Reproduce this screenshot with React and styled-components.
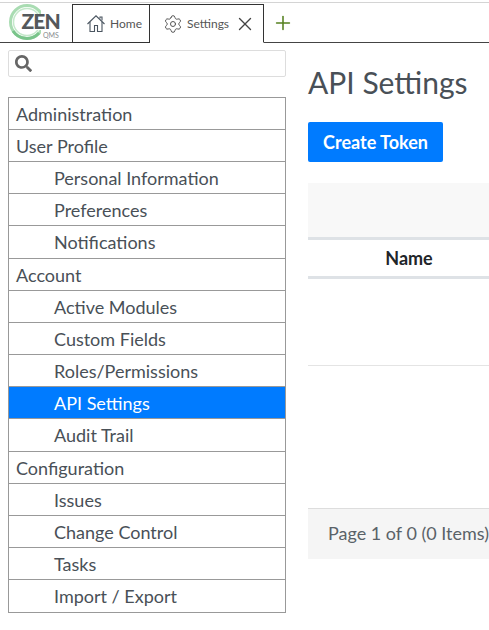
import React from "react";
import styled, { createGlobalStyle } from "styled-components";
import { Settings, X, Plus } from "lucide-react";
import { FaSearch } from "react-icons/fa";

const Global = createGlobalStyle`
  html, body {
    margin: 0;
    padding: 0;
    background: #fff;
    overflow: hidden;
    font-family: Lato, "Open Sans", sans-serif;
    color: #495057;
  }
  * { box-sizing: border-box; }
`;

const Page = styled.div`
  width: 489px;
  height: 630px;
  overflow: hidden;
  display: flex;
  flex-direction: column;
`;

const TopBar = styled.header`
  margin-top: 2px;
  height: 41px;
  border-top: 1px solid #d4d4d4;
  display: flex;
  align-items: flex-end;
  padding-top: 1px;
`;

const LogoWrap = styled.div`
  width: 72px;
  height: 39px;
  flex: none;
  border-bottom: 1px solid #444;
`;

const Tab = styled.div`
  height: 39px;
  width: ${(p) => p.$w}px;
  flex: none;
  display: flex;
  align-items: center;
  border: 1px solid #333;
  border-left-width: ${(p) => (p.$active ? 0 : "1px")};
  border-bottom-color: ${(p) => (p.$active ? "#fff" : "#333")};
  padding-left: ${(p) => (p.$active ? 13 : 14)}px;
  gap: ${(p) => (p.$active ? 4 : 5)}px;
  font-size: 12px;
  color: #555;
  svg { flex: none; }
`;

const CloseBtn = styled.span`
  display: flex;
  margin-left: 1px;
  color: #444;
`;

const TabRest = styled.div`
  flex: 1;
  height: 39px;
  border-bottom: 1px solid #444;
  padding-left: 8px;
  display: flex;
  align-items: center;
  color: #55801f;
`;

const Body = styled.div`
  display: flex;
  flex: 1;
  min-height: 0;
`;

const Side = styled.aside`
  width: 278px;
  margin-left: 8px;
  flex: none;
  padding-top: 7px;
`;

const SearchBox = styled.div`
  height: 27px;
  border: 1px solid #ddd;
  border-radius: 2px;
  display: flex;
  align-items: center;
  padding-left: 6px;
  color: #666;
`;

const Menu = styled.nav`
  margin-top: 20px;
  border: 1px solid #999;
  border-bottom-width: 0;
`;

const Item = styled.div`
  height: ${(p) => (p.$tall ? 33 : 32)}px;
  border-bottom: 1px solid #999;
  font-size: 18px;
  line-height: 33px;
  padding-left: ${(p) => (p.$sub ? 45 : 7)}px;
  color: ${(p) => (p.$active ? "#fff" : "#495057")};
  background: ${(p) => (p.$active ? "#007bff" : "#fff")};
`;

const Main = styled.main`
  margin-left: 22px;
  width: 400px;
  flex: none;
`;

const Title = styled.h1`
  margin: 20px 0 0;
  font-size: 30px;
  font-weight: 400;
  line-height: 38px;
  color: #495057;
`;

const Primary = styled.button`
  display: block;
  margin-top: 21px;
  width: 135px;
  height: 40px;
  border: 0;
  border-radius: 2px;
  background: #007bff;
  color: #fff;
  font-family: inherit;
  font-size: 18px;
  font-weight: 700;
  padding: 0;
`;

const Toolbar = styled.div`
  margin-top: 21px;
  height: 54px;
  background: #f8f8f8;
`;

const HeadRow = styled.div`
  display: flex;
  height: 42px;
  border-top: 3px solid #dee2e6;
  border-bottom: 3px solid #dee2e6;
`;

const HeadCell = styled.div`
  width: 202px;
  text-align: center;
  font-size: 18px;
  font-weight: 700;
  color: #212529;
  line-height: 36px;
`;

const Empty = styled.div`
  height: 87px;
  border-bottom: 1px solid #e4e4e4;
`;

const Pager = styled.div`
  margin-top: 142px;
  height: 51px;
  background: #f5f5f5;
  border-top: 1px solid #ddd;
  padding-left: 20px;
  font-size: 18px;
  line-height: 48px;
  color: #5a6268;
  white-space: nowrap;
`;

const Logo = () => (
  <svg width="72" height="38" viewBox="0 0 72 38">
    <g fill="none">
      <circle cx="27" cy="18" r="16.5" stroke="#a9dcb2" strokeWidth="3" />
      <circle cx="27" cy="18" r="13.5" stroke="#c4e8ca" strokeWidth="1.5" />
      <path d="M13 27a16.5 16.5 0 0 0 26 2" stroke="#79c48a" strokeWidth="3" />
    </g>
    <rect x="41" y="5" width="30" height="26" fill="#fff" />
    <rect x="24" y="10" width="20" height="16" fill="#fff" />
    <text x="21.5" y="25" fontFamily="Lato" fontWeight="900" fontSize="21" letterSpacing="-0.9" fill="#54585b">ZEN</text>
    <text x="43" y="34" fontFamily="Lato" fontSize="7" fill="#8a8d8f">QMS</text>
  </svg>
);

const HomeIcon = () => (
  <svg width="18" height="17" viewBox="0 0 18 17" fill="none" stroke="#4a5560" strokeWidth="1.1">
    <path d="M.5 9 9 .8 17.5 9" />
    <path d="M3 7v9.5h4.5v-6h3v6H15V7" />
    <path d="M13 3.5V2h2v3.5" />
  </svg>
);

const menu = [
  ["Administration"],
  ["User Profile"],
  ["Personal Information", 1],
  ["Preferences", 1],
  ["Notifications", 1, 0, 1],
  ["Account"],
  ["Active Modules", 1],
  ["Custom Fields", 1],
  ["Roles/Permissions", 1],
  ["API Settings", 1, 1],
  ["Audit Trail", 1, 0, 1],
  ["Configuration"],
  ["Issues", 1],
  ["Change Control", 1],
  ["Tasks", 1],
  ["Import / Export", 1, 0, 1],
];

export default function App() {
  return (
    <Page>
      <Global />
      <TopBar>
        <LogoWrap>
          <Logo />
        </LogoWrap>
        <Tab $w={78}>
          <HomeIcon />
          Home
        </Tab>
        <Tab $w={114} $active>
          <Settings size={20} strokeWidth={1.2} />
          Settings
          <CloseBtn>
            <X size={22} strokeWidth={1.5} />
          </CloseBtn>
        </Tab>
        <TabRest>
          <Plus size={22} strokeWidth={1.7} />
        </TabRest>
      </TopBar>
      <Body>
        <Side>
          <SearchBox>
            <FaSearch size={17} />
          </SearchBox>
          <Menu>
            {menu.map(([label, sub, active, tall]) => (
              <Item key={label} $sub={sub} $active={active} $tall={tall}>
                {label}
              </Item>
            ))}
          </Menu>
        </Side>
        <Main>
          <Title>API Settings</Title>
          <Primary>Create Token</Primary>
          <Toolbar />
          <HeadRow>
            <HeadCell>Name</HeadCell>
          </HeadRow>
          <Empty />
          <Pager>Page 1 of 0 (0 Items)</Pager>
        </Main>
      </Body>
    </Page>
  );
}
